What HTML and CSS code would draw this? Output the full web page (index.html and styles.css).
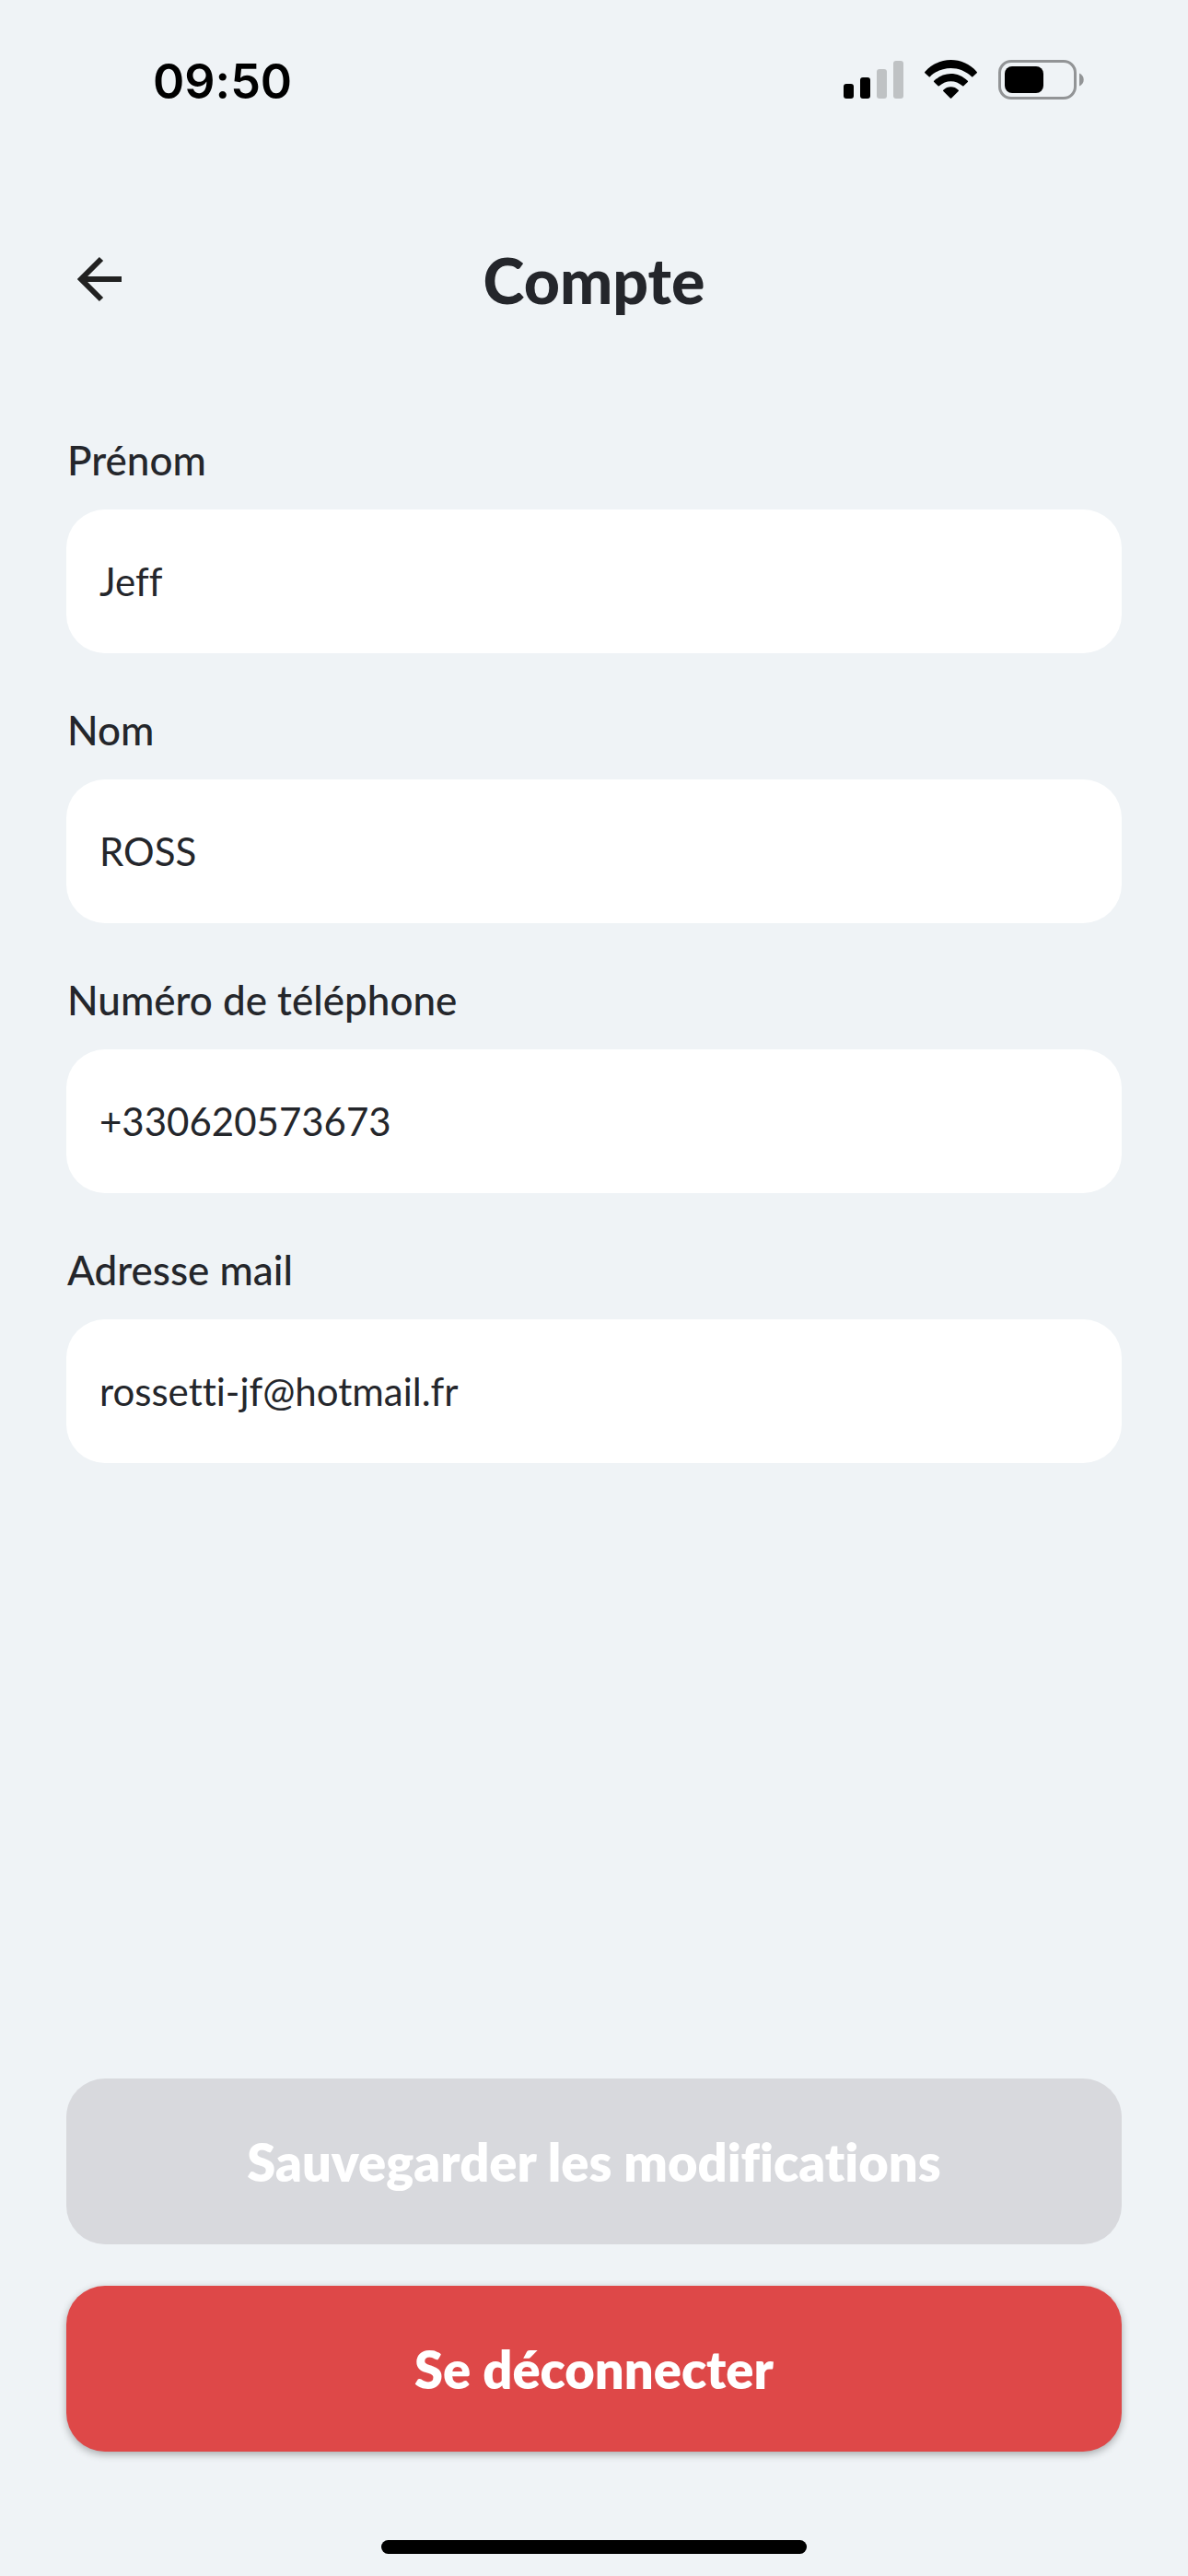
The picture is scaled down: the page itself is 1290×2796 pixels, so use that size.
FILE: index.html
```html
<!DOCTYPE html>
<html lang="fr">
  <head>
    <meta charset="UTF-8" />
    <meta name="viewport" content="width=device-width, initial-scale=1.0" />
    <title>Compte</title>
    <link rel="stylesheet" href="styles.css">
  </head>
  <body>
    <div class="status-bar">
      <span class="time">09:50</span>
      <svg class="status-icons" viewBox="0 0 262 46" aria-hidden="true">
        <!-- signal -->
        <rect x="0" y="26" width="11" height="16" rx="3" />
        <rect x="18" y="19" width="11" height="23" rx="3" />
        <rect x="36" y="10" width="11" height="32" rx="3" fill="#bfc2c4" />
        <rect x="54" y="1" width="11" height="41" rx="3" fill="#bfc2c4" />
        <!-- wifi -->
        <path d="M88.3 12.9C103.5 -4.3 129.5 -4.3 144.7 12.9Q145.3 13.5 144.7 14.2L140.3 18.3Q139.7 18.7 139.1 18.2C126.5 5.8 106.5 5.8 93.9 18.2Q93.3 18.7 92.7 18.3L88.3 14.2Q87.7 13.5 88.3 12.9Z" />
        <path d="M98.2 22.8C108.5 12.4 124.5 12.4 134.8 22.8Q135.4 23.5 134.8 24.1L130.4 28.3Q129.8 28.8 129.2 28.3C121.8 21.4 111.2 21.4 103.8 28.3Q103.2 28.8 102.6 28.3L98.2 24.1Q97.6 23.5 98.2 22.8Z" />
        <path d="M108.3 32.7C113 28.2 120 28.2 124.7 32.7Q125.4 33.4 124.7 34.1L117.2 41.5Q116.5 42.2 115.8 41.5L108.3 34.1Q107.6 33.4 108.3 32.7Z" />
        <!-- battery -->
        <rect x="169.5" y="1.5" width="82" height="40" rx="12.5" fill="none" stroke="#929496" stroke-width="3" />
        <rect x="175" y="7" width="42" height="29" rx="8" />
        <path d="M256 14.5C262.3 17 262.3 26 256 28.5Z" fill="#929496" />
      </svg>
    </div>

    <header>
      <button type="button" class="back" aria-label="Retour">
        <svg viewBox="0 0 72 72" aria-hidden="true">
          <path d="M60 36H16M38 14L16 36L38 58" />
        </svg>
      </button>
      <h1>Compte</h1>
    </header>

    <form id="accountForm">
      <div class="field">
        <label for="firstName">Prénom</label>
        <input type="text" id="firstName" value="Jeff" />
      </div>

      <div class="field">
        <label for="lastName">Nom</label>
        <input type="text" id="lastName" value="ROSS" />
      </div>

      <div class="field">
        <label for="phone">Numéro de téléphone</label>
        <input type="tel" id="phone" value="+330620573673" />
      </div>

      <div class="field">
        <label for="email">Adresse mail</label>
        <input type="email" id="email" value="rossetti-jf@hotmail.fr" />
      </div>

      <div class="actions">
        <button type="submit" class="save" disabled>Sauvegarder les modifications</button>
        <button type="button" class="logout">Se déconnecter</button>
      </div>
    </form>

    <div class="home-indicator"></div>
  </body>
</html>
```
FILE: styles.css
```css
* {
  box-sizing: border-box;
}

body {
  display: flex;
  flex-direction: column;
  min-height: 100vh;
  margin: 0;
  padding: 0 72px 24px;
  background-color: #eff3f6;
  color: #24262b;
  font-family: Lato, "Open Sans", sans-serif;
  font-variant-ligatures: none;
}

.status-bar {
  display: flex;
  align-items: center;
  justify-content: space-between;
  height: 176px;
  padding: 0 40px 0 94px;
  color: #000;
}

.time {
  font-family: Inter, sans-serif;
  font-size: 52px;
  font-weight: 600;
}

.status-icons {
  width: 262px;
  height: 46px;
}

header {
  display: grid;
  grid-template-columns: 72px 1fr 72px;
  align-items: center;
  height: 254px;
}

h1 {
  margin: 0;
  font-size: 68px;
  font-weight: 900;
  text-align: center;
}

button {
  border: none;
  font-family: inherit;
  cursor: pointer;
}

.back {
  width: 72px;
  height: 72px;
  padding: 0;
  background: none;
}

.back svg {
  display: block;
  fill: none;
  stroke: #212121;
  stroke-width: 6;
}

form {
  display: flex;
  flex: 1;
  flex-direction: column;
  gap: 57px;
  padding-top: 43px;
}

.field {
  display: flex;
  flex-direction: column;
  gap: 28px;
}

label {
  padding-left: 1px;
  font-size: 44px;
  font-weight: 500;
  line-height: 52px;
}

input {
  width: 100%;
  height: 156px;
  padding: 0 36px;
  border: none;
  border-radius: 42px;
  background-color: #fff;
  color: inherit;
  font-family: inherit;
  font-size: 42px;
  font-variant-ligatures: inherit;
}

.actions {
  display: flex;
  flex-direction: column;
  gap: 45px;
  margin-top: auto;
}

.actions button {
  width: 100%;
  height: 180px;
  border-radius: 42px;
  color: #fff;
  font-size: 56px;
  font-weight: 800;
  font-variant-ligatures: inherit;
}

.save {
  background-color: #d8d9dd;
  cursor: default;
}

.logout {
  background-color: #de4848;
  box-shadow: 0 3px 8px rgba(0, 0, 0, 0.3);
}

.home-indicator {
  align-self: center;
  width: 462px;
  max-width: 100%;
  height: 15px;
  margin-top: 96px;
  border-radius: 8px;
  background-color: #000;
}
```
